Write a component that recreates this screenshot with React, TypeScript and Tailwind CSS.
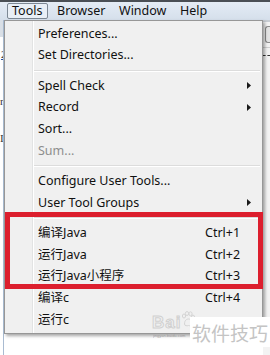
import React from "react";

const FONT = "font-['Noto_Sans','Noto_Sans_CJK_SC',sans-serif]";

function Arrow() {
  return (
    <svg width="4" height="7" viewBox="0 0 4 7" className="mr-[11px] shrink-0">
      <path d="M0 0 L4 3.5 L0 7 Z" fill="#1a1a1a" />
    </svg>
  );
}

function Item({
  label,
  shortcut,
  sub,
  disabled,
}: {
  label: string;
  shortcut?: string;
  sub?: boolean;
  disabled?: boolean;
}) {
  return (
    <div className="flex h-[21.6px] items-center pl-[4px]">
      <span
        className={`w-[167px] shrink-0 whitespace-nowrap ${
          disabled ? "text-[#8d8d8d]" : "text-[#111]"
        }`}
      >
        {label}
      </span>
      <span className="flex-1 whitespace-nowrap text-[#111]">{shortcut}</span>
      {sub && <Arrow />}
    </div>
  );
}

function Sep() {
  return (
    <div className="flex h-[9px] flex-col justify-center pr-[2px]">
      <div className="h-px bg-[#dcdcdc]" />
      <div className="h-px bg-white" />
    </div>
  );
}

function Paw() {
  return (
    <svg width="14" height="16" viewBox="0 0 14 16" fill="none" stroke="#d4d4d4" strokeWidth="1">
      <ellipse cx="3" cy="5" rx="1.6" ry="2" />
      <ellipse cx="6" cy="2.5" rx="1.6" ry="2" />
      <ellipse cx="9.5" cy="2.8" rx="1.6" ry="2" />
      <ellipse cx="12" cy="6" rx="1.5" ry="1.9" />
      <path d="M3.5 13 C3.5 9 6 8 7.5 8 C9 8 11.5 9 11.5 13 C11.5 15 9 15 7.5 14.5 C6 15 3.5 15 3.5 13 Z" />
    </svg>
  );
}

export default function App() {
  return (
    <div
      className={`relative h-[355px] w-[270px] overflow-hidden bg-white text-[12.5px] leading-none ${FONT}`}
    >
      {/* menu bar */}
      <div className="h-[2px] bg-[#4a4f55]" />
      <div className="flex h-[18px] items-center bg-gradient-to-b from-[#e4ecf5] to-[#d5dfeb] pl-[7px] text-[#111]">
        <div className="flex h-[16px] w-[41px] items-center rounded-[2px] border border-[#7d8894] bg-[#e9eff6] pl-[4px]">
          Tools
        </div>
        <div className="ml-[4px] w-[62px] pl-[5px]">Browser</div>
        <div className="w-[61px] pl-[5px]">Window</div>
        <div className="pl-[5px]">Help</div>
      </div>

      {/* background windows */}
      <div className="flex h-[335px]">
        <div className="w-[4px] overflow-hidden border-r border-[#a9bbd1] bg-white text-[11px] text-[#333]">
          <div className="h-[17px] bg-[#d9dfe6]" />
          <div className="mt-[12px] h-[12px] pl-px underline decoration-[#2a4fa0] font-['Liberation_Serif',serif]">2</div>
          <div className="mt-[35px] h-[11px] font-['Liberation_Serif',serif]">r</div>
          <div className="mt-[26px] h-[11px] font-['Liberation_Serif',serif]">I</div>
        </div>
        <div className="flex-1" />
        <div className="w-[7px] bg-[#f3f3f3]">
          <div className="h-[2px] bg-[#c8cdd3]" />
          <div className="ml-[2px] mt-[4px] h-[17px] rounded-l-[3px] border border-r-0 border-[#8c8c8c] bg-[#e4e4e4]" />
          <div className="mt-[4px] h-px bg-[#d0d0d0]" />
          <div className="mt-[7px] h-px border-t border-dashed border-[#333]" />
        </div>
      </div>

      {/* dropdown menu */}
      <div className="absolute left-[4px] top-[20px] flex h-[314px] w-[259px] border border-[#979797] bg-[#f0f0f0] shadow-[2px_2px_3px_rgba(0,0,0,0.35)]">
        <div className="w-[28px] shrink-0 border-r border-[#e2e3e3]" />
        <div className="flex-1 border-l border-white pt-[2px]">
          <Item label="Preferences..." />
          <Item label="Set Directories..." />
          <Sep />
          <Item label="Spell Check" sub />
          <Item label="Record" sub />
          <Item label="Sort..." />
          <Item label="Sum..." disabled />
          <Sep />
          <Item label="Configure User Tools..." />
          <Item label="User Tool Groups" sub />
          <Sep />
          <Item label="编译Java" shortcut="Ctrl+1" />
          <Item label="运行Java" shortcut="Ctrl+2" />
          <Item label="运行Java小程序" shortcut="Ctrl+3" />
          <Item label="编译c" shortcut="Ctrl+4" />
          <Item label="运行c" />
        </div>
      </div>

      {/* red annotation box */}
      <div className="absolute left-[5px] top-[212px] h-[77px] w-[258px] border-[5px] border-[#dc1f2e]" />

      {/* watermark */}
      <div className="absolute left-[152px] top-[311px] flex items-end">
        <span className="text-[17px] font-bold tracking-[1px] text-transparent [-webkit-text-stroke:1px_#d0d0d0] font-['Liberation_Sans',sans-serif]">
          Bai
        </span>
        <div className="mb-[4px]">
          <Paw />
        </div>
      </div>
      <div className="absolute left-[153px] top-[333px] w-[36px] overflow-hidden whitespace-nowrap text-[4px] leading-[5px] text-[#9a9a9a] font-['Liberation_Sans',sans-serif]">
        jingyan.baidu.com
      </div>
      <div className="absolute left-[190px] top-[317px] flex h-[30px] w-[80px] items-center bg-white pl-[2px] text-[19px] text-[#c4c4c4] font-['Noto_Sans_CJK_SC',sans-serif]">
        软件技巧
      </div>
    </div>
  );
}
